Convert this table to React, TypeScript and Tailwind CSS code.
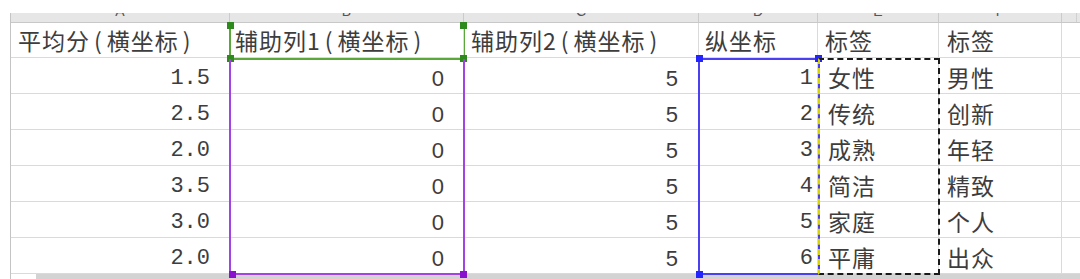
import React from "react";

const cjk = "font-['Noto_Sans_CJK_SC',sans-serif]";

const rows = [
  ["1.5", "0", "5", "1", "女性", "男性"],
  ["2.5", "0", "5", "2", "传统", "创新"],
  ["2.0", "0", "5", "3", "成熟", "年轻"],
  ["3.5", "0", "5", "4", "简洁", "精致"],
  ["3.0", "0", "5", "5", "家庭", "个人"],
  ["2.0", "0", "5", "6", "平庸", "出众"],
];

// column widths, left to right (A..F)
const widths = ["w-[219px]", "w-[234px]", "w-[235px]", "w-[119px]", "w-[121px]", "w-[123px]"];
const letters = ["A", "B", "C", "D", "E", "F"];

const Paren: React.FC<{ c: string }> = ({ c }) => <span className="mx-[4px]">{c}</span>;

const Handle: React.FC<{ className: string }> = ({ className }) => (
  <div className={"absolute h-[7px] w-[7px] " + className} />
);

const App: React.FC = () => {
  const cell = "flex h-full shrink-0 border-r border-[#dadada]";
  const txt = "text-[#3d3d3d]";

  return (
    <div className="relative h-[279px] w-[1080px] overflow-hidden bg-white pt-[13px]">
      <div className="ml-[10px] flex h-full flex-col border-l border-[#c4c4c4]">
        {/* column letter band, letters mostly cut off */}
        <div className="flex h-[10px] shrink-0 border-b border-[#c8c8c8] bg-[#e6e6e6]">
          {letters.map((l, i) => (
            <div key={l} className={`${widths[i]} flex shrink-0 justify-center overflow-hidden border-r border-[#cbcbcb]`}>
              <span className="-mt-[10px] font-['Liberation_Sans',sans-serif] text-[14px] leading-[16px] text-[#555]">{l}</span>
            </div>
          ))}
          <div className="w-[15px] shrink-0 border-r border-[#d0d0d0]" />
        </div>

        {/* header row */}
        <div className={`flex h-[35px] shrink-0 border-b border-[#dadada] ${cjk} text-[23px] tracking-[1px] ${txt}`}>
          <div className={`${cell} ${widths[0]} items-center pl-[7px] leading-none`}>
            平均分<Paren c="(" />横坐标<Paren c=")" />
          </div>
          <div className={`${cell} ${widths[1]} items-center pl-[5px] leading-none`}>
            辅助列1<Paren c="(" />横坐标<Paren c=")" />
          </div>
          <div className={`${cell} ${widths[2]} items-center pl-[7px] leading-none`}>
            辅助列2<Paren c="(" />横坐标<Paren c=")" />
          </div>
          <div className={`${cell} ${widths[3]} items-center pl-[6px] leading-none`}>纵坐标</div>
          <div className={`${cell} ${widths[4]} items-center pl-[7px] leading-none`}>标签</div>
          <div className={`${cell} ${widths[5]} items-center pl-[8px] leading-none`}>标签</div>
        </div>

        {/* data rows */}
        {rows.map((r, ri) => (
          <div key={ri} className={`flex h-[36px] shrink-0 border-b border-[#dadada] ${txt}`}>
            <div className={`${cell} ${widths[0]} items-center justify-end pr-[19px] pt-[6px] font-['Liberation_Mono',monospace] text-[22px]`}>
              {r[0]}
            </div>
            <div className={`${cell} ${widths[1]} items-center justify-end pr-[19px] pt-[6px] font-['Liberation_Sans',sans-serif] text-[22px]`}>
              {r[1]}
            </div>
            <div className={`${cell} ${widths[2]} items-center justify-end pr-[20px] pt-[6px] font-['Liberation_Sans',sans-serif] text-[22px]`}>
              {r[2]}
            </div>
            <div className={`${cell} ${widths[3]} items-center justify-end pr-[4px] pt-[6px] font-['Liberation_Mono',monospace] text-[22px]`}>
              {r[3]}
            </div>
            <div className={`${cell} ${widths[4]} items-center pl-[10px] pt-[4px] ${cjk} text-[23px] tracking-[1px]`}>
              {r[4]}
            </div>
            <div className={`${cell} ${widths[5]} items-center pl-[8px] pt-[4px] ${cjk} text-[23px] tracking-[1px]`}>
              {r[5]}
            </div>
          </div>
        ))}

        {/* horizontal scroll strip */}
        <div className="flex h-[6px] shrink-0">
          <div className="w-[25px] shrink-0 bg-white" />
          <div className="flex-1 bg-[#d3d3d3]" />
        </div>
      </div>

      {/* header selection (green) */}
      <div className="absolute left-[229px] top-[23px] h-[37px] w-[236px] border-b-2 border-l-2 border-r border-[#5aa83a]" />
      <Handle className="left-[227px] top-[22px] bg-[#2f8a1e]" />
      <Handle className="left-[227px] top-[55px] bg-[#2f8a1e]" />
      <Handle className="left-[460px] top-[22px] bg-[#2f8a1e]" />
      <Handle className="left-[460px] top-[55px] bg-[#2f8a1e]" />

      {/* purple range */}
      <div className="absolute left-[229px] top-[59px] h-[216px] w-[236px] border-2 border-t-0 border-[#a244e4]" />
      <Handle className="left-[229px] top-[271px] bg-[#8a12cc]" />
      <Handle className="left-[460px] top-[271px] bg-[#8a12cc]" />

      {/* blue range */}
      <div className="absolute left-[698px] top-[58px] h-[217px] w-[122px] border-2 border-[#4b3ff2]" />
      <Handle className="left-[696px] top-[55px] bg-[#2424ff]" />
      <Handle className="left-[815px] top-[55px] bg-[#2424ff]" />
      <Handle className="left-[696px] top-[271px] bg-[#2424ff]" />

      {/* copied range, marching ants */}
      <div className="absolute left-[818px] top-[58px] h-[217px] w-[122px] border-2 border-dashed border-[#1a1a1a] border-l-[#d8d400]" />
    </div>
  );
};

export default App;
